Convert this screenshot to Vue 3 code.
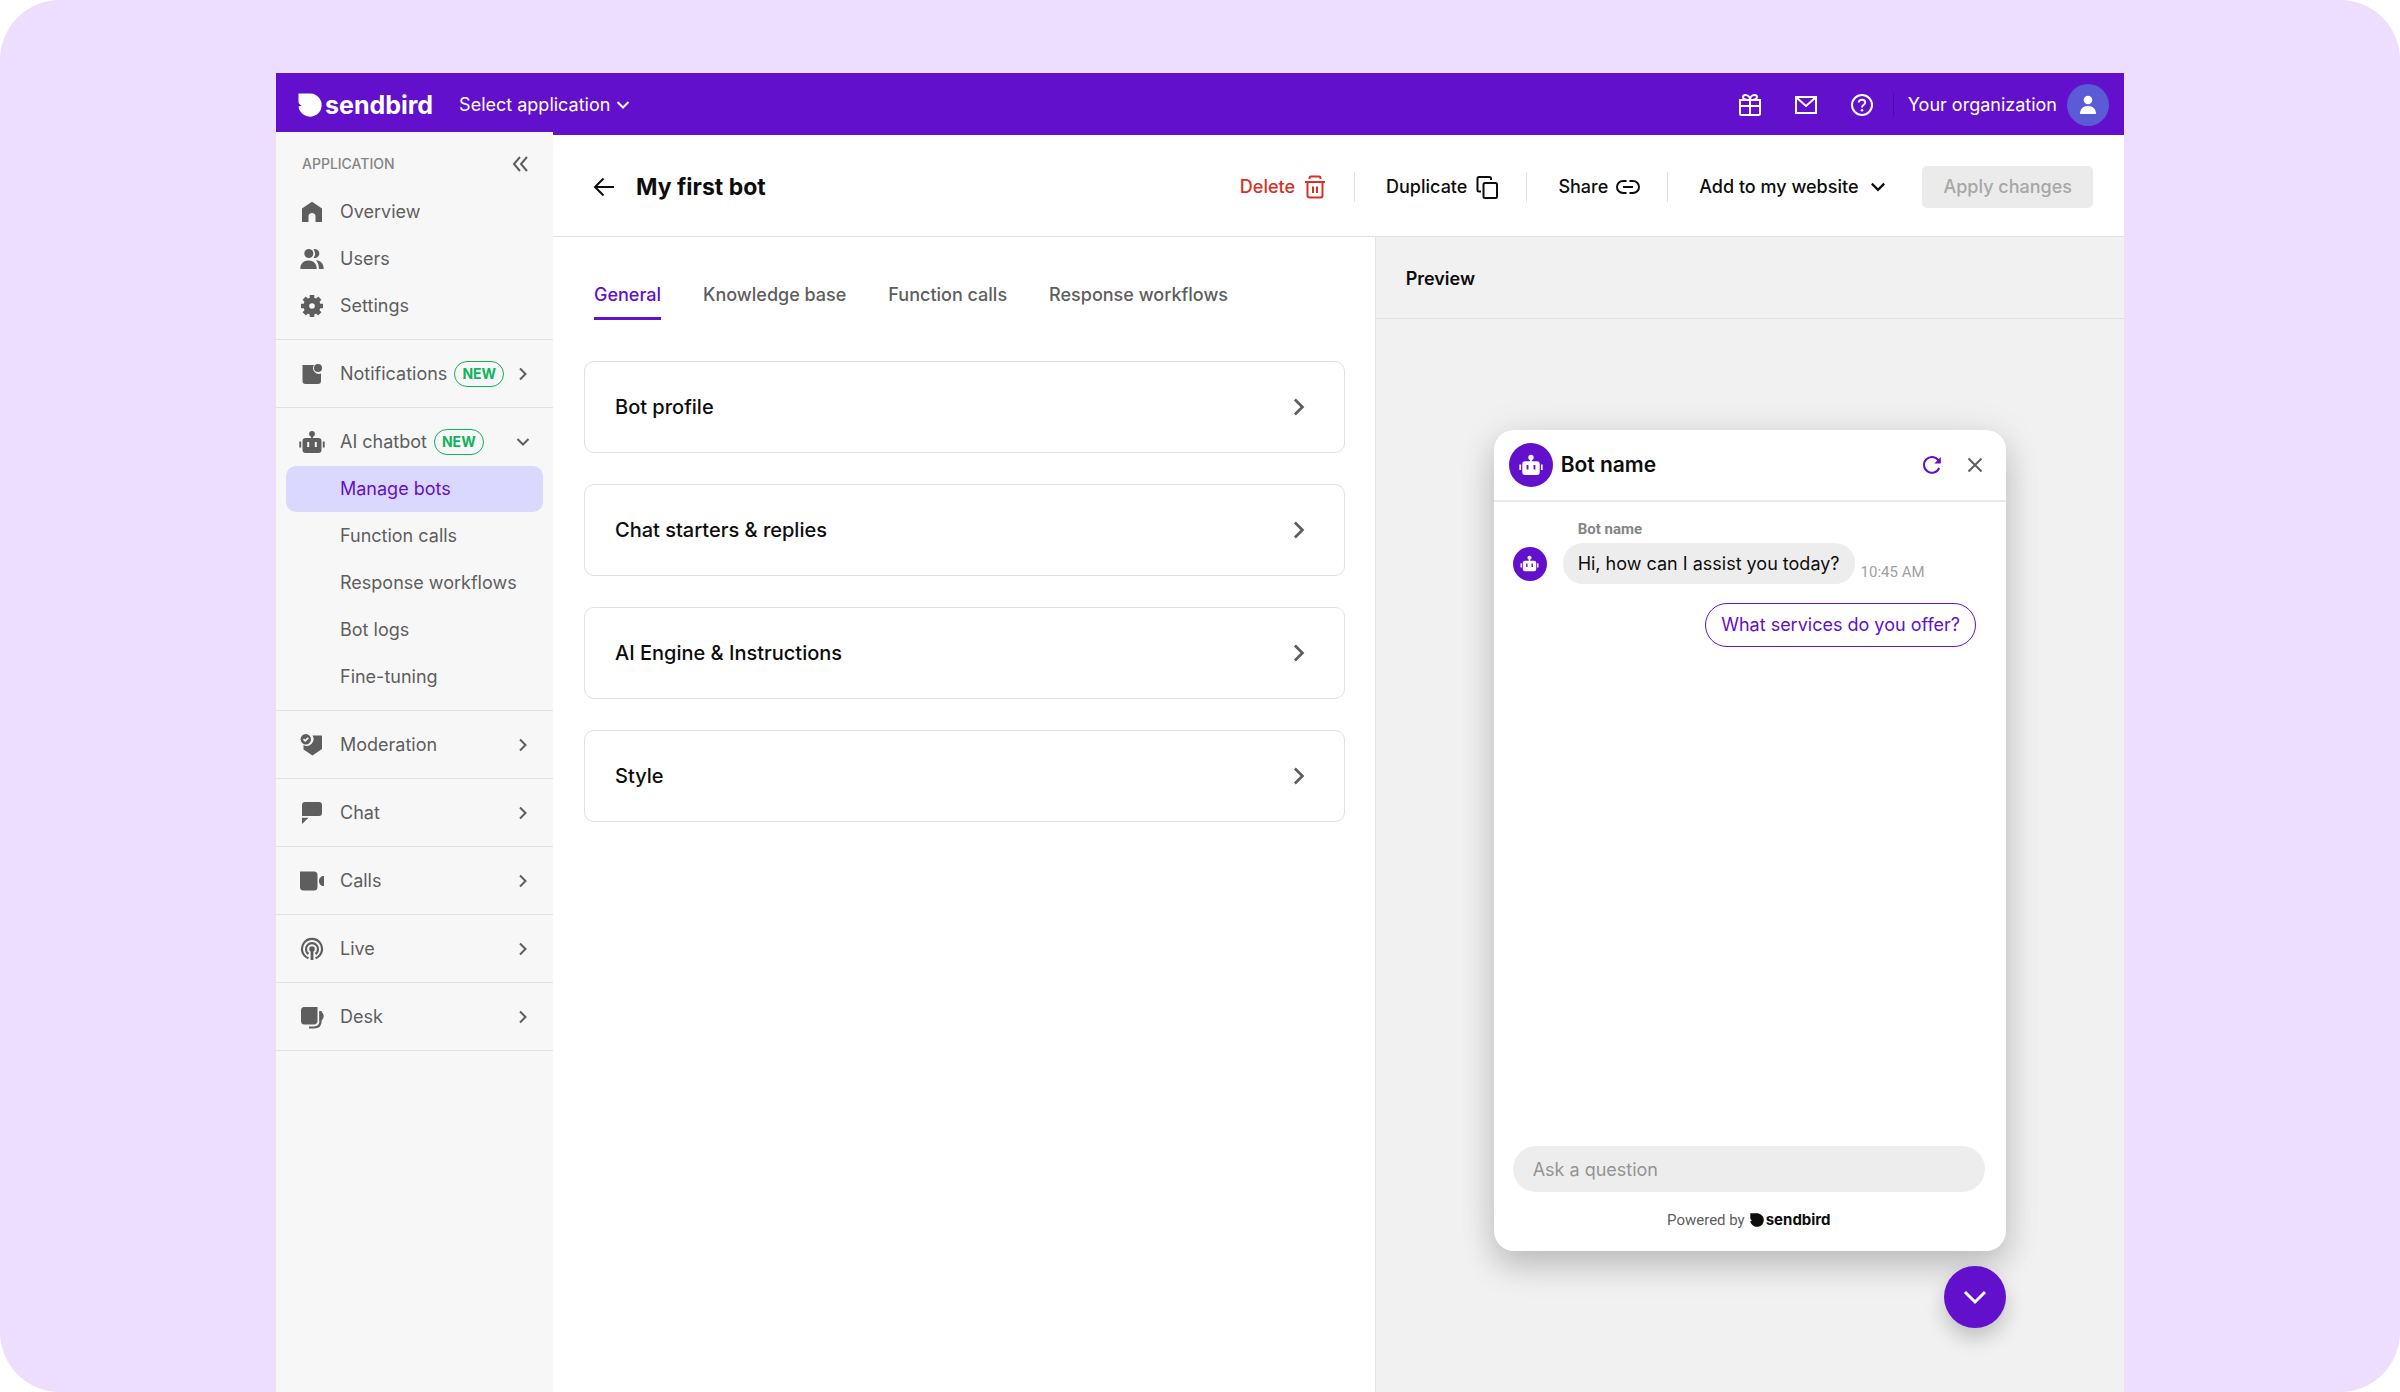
<script setup>
import { ref } from 'vue'

const question = ref('')

const topLinks = [
  { label: 'Overview', icon: 'home' },
  { label: 'Users', icon: 'users' },
  { label: 'Settings', icon: 'gear' }
]

const products = [
  { label: 'Notifications', icon: 'notification', isNew: true },
  {
    label: 'AI chatbot',
    icon: 'bot',
    isNew: true,
    children: ['Manage bots', 'Function calls', 'Response workflows', 'Bot logs', 'Fine-tuning']
  },
  { label: 'Moderation', icon: 'shield' },
  { label: 'Chat', icon: 'chat' },
  { label: 'Calls', icon: 'video' },
  { label: 'Live', icon: 'live' },
  { label: 'Desk', icon: 'desk' }
]

const tabs = ['General', 'Knowledge base', 'Function calls', 'Response workflows']
const cards = ['Bot profile', 'Chat starters & replies', 'AI Engine & Instructions', 'Style']
</script>

<template>
  <div class="page">
    <svg class="sprite" aria-hidden="true">
      <symbol id="mark" viewBox="0 0 24 24">
        <path d="M0.5 0.5H12A11.6 11.6 0 1 1 2.6 18.8C1.4 17.2 0.7 15.4 0.6 13.6L3.8 12.5C2 11.9 0.5 10.4 0.5 8.400Z" fill="currentColor" />
      </symbol>
      <symbol id="home" viewBox="0 0 24 24">
        <path d="M2 22V8.600L12 1.800L22 8.600V22H15.500V16.500A3.500 3.500 0 0 0 8.500 16.500V22Z" fill="currentColor" />
      </symbol>
      <symbol id="users" viewBox="0 0 24 24">
        <g fill="currentColor">
          <circle cx="8.800" cy="6.500" r="4.500" />
          <path d="M0.300 22C0.300 16.500 3.500 13.500 8.500 13.500S16.700 16.500 16.700 22Z" />
          <path d="M13.500 2.200A4.500 4.500 0 1 1 13.500 10.800A7 7 0 0 0 13.500 2.200Z" />
          <path d="M16 13.300C20.800 13.600 23.700 17 23.700 22H18.900C18.900 18.300 17.900 15.300 16 13.300Z" />
        </g>
      </symbol>
      <symbol id="gear" viewBox="0 0 24 24">
        <circle cx="12" cy="12" r="5.700" fill="none" stroke="currentColor" stroke-width="5.800" />
        <path d="M12 1V5M12 19V23M1 12H5M19 12H23M4.200 4.200L7 7M17 17L19.800 19.800M4.200 19.800L7 17M17 7L19.800 4.200" fill="none" stroke="currentColor" stroke-width="4.600" />
      </symbol>
      <symbol id="notification" viewBox="0 0 24 24">
        <path d="M2.500 3H14A5.800 5.800 0 0 0 21 11.500V19A3 3 0 0 1 18 22H5.500A3 3 0 0 1 2.500 19Z" fill="currentColor" />
        <circle cx="18" cy="6" r="4" fill="currentColor" />
      </symbol>
      <symbol id="bot" viewBox="0 0 26 24">
        <g fill="currentColor">
          <circle cx="13" cy="3.800" r="2.900" />
          <path d="M12.100 5H13.900V9H12.100ZM0.300 11.500H2.200V17.500H0.300ZM23.800 11.500H25.700V17.500H23.800Z" />
          <path fill-rule="evenodd" d="M6.500 8H19.500A3 3 0 0 1 22.500 11V20A3 3 0 0 1 19.500 23H6.500A3 3 0 0 1 3.500 20V11A3 3 0 0 1 6.500 8ZM8.200 12V17H10.200V12ZM15.800 12V17H17.800V12Z" />
        </g>
      </symbol>
      <symbol id="shield" viewBox="0 0 24 24">
        <path d="M12.500 2.500H22V16L12.500 22.500L3.500 16.500V12A6.800 6.800 0 0 0 12.500 2.500Z" fill="currentColor" />
        <circle cx="5.800" cy="6.200" r="5.200" fill="currentColor" />
        <path d="M3.500 6.200L5.200 7.800L8.300 4.800" fill="none" stroke="#f7f7f7" stroke-width="1.800" />
      </symbol>
      <symbol id="chat" viewBox="0 0 24 24">
        <path d="M5 1H19A3 3 0 0 1 22 4V12A3 3 0 0 1 19 15H2V4A3 3 0 0 1 5 1ZM2 16.800H8.500L2 23Z" fill="currentColor" />
      </symbol>
      <symbol id="video" viewBox="0 0 24 24">
        <path d="M0 2.500H14A3.500 3.500 0 0 1 17.500 6V18A3.500 3.500 0 0 1 14 21.500H3.500A3.500 3.500 0 0 1 0 18ZM24 7V17C21 17 19 15 19 12S21 7 24 7Z" fill="currentColor" />
      </symbol>
      <symbol id="live" viewBox="0 0 24 24">
        <g fill="none" stroke="currentColor" stroke-width="2.200">
          <path d="M8.500 21.300A10 10 0 1 1 15.500 21.300" />
          <path d="M8.500 17A6 6 0 1 1 15.500 17" />
          <path d="M12 12V23" stroke-width="2.800" />
        </g>
        <circle cx="12" cy="12" r="2.800" fill="currentColor" />
      </symbol>
      <symbol id="desk" viewBox="0 0 24 24">
        <path d="M3.500 2H17.500V15.500A3.500 3.500 0 0 1 14 19.500H4.500A3.500 3.500 0 0 1 1 16V5A3 3 0 0 1 3.500 2Z" fill="currentColor" />
        <path d="M9 22.500H14C18.500 22.500 20.500 20 20.500 16V6" fill="none" stroke="currentColor" stroke-width="2.200" />
        <path d="M19.400 6C22 6.500 23.700 8.500 23.700 11S22 15.800 19.400 16.300Z" fill="currentColor" />
      </symbol>
      <symbol id="right" viewBox="0 0 16 16">
        <path d="M5 2.500L10.500 8L5 13.500" fill="none" stroke="currentColor" stroke-width="2" />
      </symbol>
      <symbol id="down" viewBox="0 0 16 16">
        <path d="M2.500 5L8 10.500L13.500 5" fill="none" stroke="currentColor" stroke-width="2" />
      </symbol>
    </svg>

    <div class="app">
      <header class="topbar">
        <a class="brand" href="#">
          <svg class="brand-mark"><use href="#mark" /></svg>
          <span>sendbird</span>
        </a>
        <button class="app-switch" type="button">
          Select application
          <svg class="ico16"><use href="#down" /></svg>
        </button>
        <div class="top-actions">
          <button type="button" aria-label="What's new">
            <svg class="ico24" viewBox="0 0 24 24" fill="none" stroke="currentColor" stroke-width="2">
              <path d="M2 7H22V13H2ZM2 13V20.500A1.500 1.500 0 0 0 3.500 22H20.500A1.500 1.500 0 0 0 22 20.500V13M12 7V22" />
              <path d="M12 7C6 7 5 5.500 5 4C5 2.600 6 2 7.500 2C10 2 12 4 12 7ZM12 7C18 7 19 5.500 19 4C19 2.600 18 2 16.500 2C14 2 12 4 12 7Z" />
            </svg>
          </button>
          <button type="button" aria-label="Messages">
            <svg class="ico24" viewBox="0 0 24 24" fill="none" stroke="currentColor" stroke-width="2">
              <path d="M2 4H22V20H2ZM3 5L12 13L21 5" />
            </svg>
          </button>
          <button type="button" aria-label="Help">
            <svg class="ico24" viewBox="0 0 24 24" fill="none" stroke="currentColor" stroke-width="2">
              <circle cx="12" cy="12" r="10" />
              <path d="M8.700 9.500C8.900 7.600 10.200 6.700 12 6.700C13.900 6.700 15.200 7.800 15.200 9.400C15.200 11.800 12 11.700 12 14.500" />
              <circle cx="12" cy="17.300" r="1.300" fill="currentColor" stroke="none" />
            </svg>
          </button>
        </div>
        <button class="org" type="button">
          Your organization
          <span class="org-avatar">
            <svg class="ico24" viewBox="0 0 24 24" fill="currentColor">
              <circle cx="12" cy="7" r="4.300" />
              <path d="M4 21C4 16 7 13 12 13S20 16 20 21Z" />
            </svg>
          </span>
        </button>
      </header>

      <div class="body">
        <aside class="sidebar">
          <nav>
            <section class="group first">
              <div class="group-title">
                <h2>APPLICATION</h2>
                <button type="button" aria-label="Collapse sidebar">
                  <svg class="ico18" viewBox="0 0 18 18" fill="none" stroke="currentColor" stroke-width="2">
                    <path d="M9 2L3 9L9 16M16 2L10 9L16 16" />
                  </svg>
                </button>
              </div>
              <a v-for="l in topLinks" :key="l.label" class="row" href="#">
                <svg class="ico24"><use :href="'#' + l.icon" /></svg>
                <span>{{ l.label }}</span>
              </a>
            </section>
            <section v-for="p in products" :key="p.label" class="group">
              <a class="row" href="#">
                <svg class="ico24" :class="{ wide: p.icon === 'bot' }"><use :href="'#' + p.icon" /></svg>
                <span>{{ p.label }}</span>
                <span v-if="p.isNew" class="new">NEW</span>
                <svg class="ico16 caret"><use :href="p.children ? '#down' : '#right'" /></svg>
              </a>
              <a
                v-for="(c, i) in p.children"
                :key="c"
                class="row sub"
                :class="{ active: i === 0 }"
                href="#"
              >{{ c }}</a>
            </section>
          </nav>
        </aside>

        <main class="main">
          <div class="titlebar">
            <button class="back" type="button" aria-label="Back">
              <svg class="ico24" viewBox="0 0 24 24" fill="none" stroke="currentColor" stroke-width="2">
                <path d="M22 12H3.500M11.500 3.500L3 12L11.500 20.500" />
              </svg>
            </button>
            <h1>My first bot</h1>
            <div class="tools">
              <button class="danger" type="button">
                Delete
                <svg class="ico24" viewBox="0 0 24 24" fill="none" stroke="currentColor" stroke-width="2">
                  <path d="M2 7H22M6.500 4V3A1.500 1.500 0 0 1 8 1.500H16A1.500 1.500 0 0 1 17.500 3V4M4.500 7V20.500A2 2 0 0 0 6.500 22.500H17.500A2 2 0 0 0 19.500 20.500V7M10 11.500V18M14 11.500V18" />
                </svg>
              </button>
              <button type="button">
                Duplicate
                <svg class="ico24" viewBox="0 0 24 24" fill="none" stroke="currentColor" stroke-width="2">
                  <rect x="8.500" y="8" width="13.500" height="15" rx="1.500" />
                  <path d="M6 16.500H4A1.500 1.500 0 0 1 2.500 15V3.500A1.500 1.500 0 0 1 4 2H14.500A1.500 1.500 0 0 1 16 3.500V5" />
                </svg>
              </button>
              <button type="button">
                Share
                <svg class="ico24" viewBox="0 0 24 24" fill="none" stroke="currentColor" stroke-width="2">
                  <path d="M10.500 6H7A6 6 0 0 0 7 18H10.500M13.500 6H17A6 6 0 0 1 17 18H13.500M7 12H17" />
                </svg>
              </button>
              <button class="website" type="button">
                Add to my website
                <svg class="ico18"><use href="#down" /></svg>
              </button>
            </div>
            <button class="apply" type="button" disabled>Apply changes</button>
          </div>

          <div class="panes">
            <section class="editor">
              <div class="tabs" role="tablist">
                <button
                  v-for="(t, i) in tabs"
                  :key="t"
                  type="button"
                  role="tab"
                  :aria-selected="i === 0"
                  :class="{ current: i === 0 }"
                >{{ t }}</button>
              </div>
              <div class="cards">
                <button v-for="c in cards" :key="c" class="card" type="button">
                  {{ c }}
                  <svg class="ico22"><use href="#right" /></svg>
                </button>
              </div>
            </section>

            <section class="preview">
              <h2 class="preview-title">Preview</h2>
              <div class="stage">
                <div class="widget">
                  <div class="widget-head">
                    <span class="avatar large"><svg><use href="#bot" /></svg></span>
                    <h3>Bot name</h3>
                    <button class="refresh" type="button" aria-label="Restart chat">
                      <svg class="ico22" viewBox="0 0 22 22" fill="none" stroke="currentColor" stroke-width="2">
                        <path d="M18.200 14A7.900 7.900 0 1 1 17.500 6.500L19 8.500" />
                        <path d="M19.800 3V9.500H13.300Z" fill="currentColor" stroke="none" />
                      </svg>
                    </button>
                    <button class="close" type="button" aria-label="Close chat">
                      <svg class="ico22" viewBox="0 0 22 22" fill="none" stroke="currentColor" stroke-width="2">
                        <path d="M4.500 4.500L17.500 17.500M17.500 4.500L4.500 17.500" />
                      </svg>
                    </button>
                  </div>
                  <div class="thread">
                    <p class="sender">Bot name</p>
                    <div class="message">
                      <span class="avatar small"><svg><use href="#bot" /></svg></span>
                      <p class="bubble">Hi, how can I assist you today?</p>
                      <time>10:45 AM</time>
                    </div>
                    <button class="suggestion" type="button">What services do you offer?</button>
                  </div>
                  <div class="widget-foot">
                    <input v-model="question" type="text" placeholder="Ask a question" aria-label="Ask a question" />
                    <p class="powered">
                      Powered by
                      <span class="mini-brand">
                        <svg><use href="#mark" /></svg>
                        sendbird
                      </span>
                    </p>
                  </div>
                </div>
                <button class="launcher" type="button" aria-label="Minimize chat">
                  <svg viewBox="0 0 28 28" fill="none" stroke="currentColor" stroke-width="3">
                    <path d="M4 9L14 19L24 9" />
                  </svg>
                </button>
              </div>
            </section>
          </div>
        </main>
      </div>
    </div>
  </div>
</template>

<style>
html,
body {
  margin: 0;
  background: #ffffff;
}
</style>

<style scoped>
* {
  box-sizing: border-box;
}
.page {
  display: flex;
  flex-direction: column;
  min-height: 100vh;
  padding: 73px 11.5% 0;
  border-radius: 60px;
  background: #edddff;
  color: #0d0d0d;
  font-family: Inter, "Liberation Sans", sans-serif;
  font-size: 18px;
  line-height: 24px;
}
.sprite {
  position: absolute;
  width: 0;
  height: 0;
}
h1,
h2,
h3,
p {
  margin: 0;
}
button {
  display: flex;
  align-items: center;
  padding: 0;
  border: 0;
  background: none;
  color: inherit;
  font: inherit;
  white-space: nowrap;
}
a {
  color: inherit;
  text-decoration: none;
}
svg {
  display: block;
  flex: none;
}
.ico16 { width: 16px; height: 16px; }
.ico18 { width: 18px; height: 18px; }
.ico22 { width: 22px; height: 22px; }
.ico24 { width: 24px; height: 24px; }

.app {
  flex: 1;
  display: flex;
  flex-direction: column;
}
.topbar {
  display: flex;
  align-items: center;
  height: 62px;
  padding: 1px 15px 0 22px;
  background: #6210cc;
  color: #ffffff;
}
.brand {
  display: flex;
  align-items: center;
  gap: 3px;
  font-size: 25px;
  font-weight: 700;
}
.brand-mark {
  width: 24px;
  height: 24px;
}
.app-switch {
  gap: 5px;
  margin-left: 26px;
}
.top-actions {
  display: flex;
  gap: 32px;
  margin-left: auto;
  padding-right: 19px;
  border-right: 1px solid #5109ad;
}
.org {
  gap: 10px;
  margin-left: 14px;
}
.org-avatar {
  display: flex;
  align-items: center;
  justify-content: center;
  width: 42px;
  height: 42px;
  border-radius: 50%;
  background: #5b5bd6;
}

.body {
  flex: 1;
  display: flex;
}
.sidebar {
  flex: none;
  width: 277px;
  margin-top: -3px;
  background: #f7f7f7;
  color: #5e5e5e;
}
.group {
  display: flex;
  flex-direction: column;
  gap: 1px;
  padding: 11px 10px 10px;
  border-bottom: 1px solid #e0e0e0;
}
.group.first {
  padding-top: 8px;
}
.group-title {
  display: flex;
  align-items: center;
  justify-content: space-between;
  height: 48px;
  padding: 0 14px 0 16px;
}
.group-title h2 {
  color: #858585;
  font-size: 14px;
  font-weight: 500;
}
.row {
  display: flex;
  align-items: center;
  height: 46px;
  padding: 0 12px 0 14px;
  border-radius: 10px;
}
.row .ico24 {
  margin-right: 16px;
}
.row .wide {
  width: 26px;
  margin: 0 15px 0 -1px;
}
.new {
  height: 26px;
  margin-left: 7px;
  padding: 0 7px;
  border: 1px solid #10b35e;
  border-radius: 13px;
  color: #10b35e;
  font-size: 14px;
  font-weight: 700;
}
.caret {
  margin-left: auto;
}
.sub {
  padding-left: 54px;
}
.sub.active {
  background: #dbd8ff;
  color: #6210cc;
}

.main {
  flex: 1;
  display: flex;
  flex-direction: column;
  min-width: 0;
  background: #ffffff;
}
.titlebar {
  display: flex;
  align-items: center;
  height: 102px;
  padding: 2px 31px 0 39px;
  border-bottom: 1px solid #e0e0e0;
  font-weight: 500;
}
.titlebar h1 {
  margin-left: 20px;
  font-size: 23px;
  font-weight: 700;
}
.tools {
  display: flex;
  align-items: center;
  margin-left: auto;
}
.tools button {
  gap: 8px;
  height: 30px;
  padding: 0 27px 0 31px;
}
.tools button + button {
  border-left: 1px solid #e0e0e0;
}
.tools .website {
  gap: 11px;
  padding-right: 35px;
}
.danger {
  color: #da2f26;
}
.apply {
  height: 42px;
  padding: 0 21px;
  border-radius: 5px;
  background: #ebebeb;
  color: #a6a6a6;
}
.panes {
  flex: 1;
  display: flex;
}
.editor {
  flex: none;
  width: 52.3%;
  padding: 44px 30px 31px 31px;
}
.tabs {
  display: flex;
  gap: 42px;
  padding-left: 10px;
}
.tabs button {
  height: 39px;
  padding-bottom: 8px;
  border-bottom: 3px solid transparent;
  color: #5e5e5e;
  font-weight: 500;
}
.tabs .current {
  border-color: #6210cc;
  color: #6210cc;
}
.cards {
  display: flex;
  flex-direction: column;
  gap: 31px;
  margin-top: 41px;
}
.card {
  justify-content: space-between;
  height: 92px;
  padding: 0 34px 0 30px;
  border: 1px solid #e0e0e0;
  border-radius: 10px;
  font-size: 20px;
  font-weight: 500;
}
.card svg {
  color: #5e5e5e;
}

.preview {
  flex: 1;
  min-width: 0;
  display: flex;
  flex-direction: column;
  border-left: 1px solid #e0e0e0;
  background: #f1f1f1;
}
.preview-title {
  padding: 30px 30px 27px;
  border-bottom: 1px solid #e0e0e0;
  font-size: 18px;
  font-weight: 600;
}
.stage {
  display: flex;
  flex-direction: column;
  align-items: flex-end;
  gap: 15px;
  padding: 111px 118px 64px;
}
.widget {
  display: flex;
  flex-direction: column;
  width: 100%;
  min-height: 821px;
  border-radius: 20px;
  background: #ffffff;
  box-shadow: 0 16px 32px rgba(0, 0, 0, 0.18), 0 2px 40px rgba(0, 0, 0, 0.08);
}
.widget-head {
  display: flex;
  align-items: center;
  height: 72px;
  padding: 0 20px 0 15px;
  border-bottom: 2px solid #eaeaea;
}
.widget-head h3 {
  margin: 0 auto 0 8px;
  font-size: 21px;
  font-weight: 600;
}
.refresh {
  color: #6210cc;
}
.close {
  margin-left: 21px;
  color: #5e5e5e;
}
.avatar {
  display: flex;
  align-items: center;
  justify-content: center;
  flex: none;
  border-radius: 50%;
  background: #6210cc;
  color: #ffffff;
}
.avatar.large { width: 44px; height: 44px; }
.avatar.large svg { width: 24px; height: 22px; }
.avatar.small { width: 34px; height: 34px; margin-right: 16px; }
.avatar.small svg { width: 19px; height: 17px; }
.thread {
  flex: 1;
  display: flex;
  flex-direction: column;
  padding: 15px 30px 0 19px;
}
.sender {
  padding-left: 65px;
  color: #858585;
  font-family: Roboto, sans-serif;
  font-size: 15px;
  font-weight: 700;
}
.message {
  display: flex;
  align-items: center;
  margin-top: 2px;
}
.bubble {
  height: 41px;
  padding: 0 15px;
  border-radius: 20px;
  background: #ededed;
  line-height: 41px;
}
time {
  align-self: flex-end;
  margin-left: 6px;
  color: #a0a0a0;
  font-family: Roboto, sans-serif;
  font-size: 15px;
}
.suggestion {
  align-self: flex-end;
  height: 44px;
  margin-top: 19px;
  padding: 0 15px;
  border: 1px solid #6210cc;
  border-radius: 22px;
  color: #6210cc;
}
.widget-foot {
  padding: 0 21px 19px 19px;
}
.widget-foot input {
  width: 100%;
  height: 46px;
  padding: 0 20px;
  border: 0;
  border-radius: 23px;
  background: #ededed;
  color: #0d0d0d;
  font: inherit;
}
.widget-foot input::placeholder {
  color: #949494;
}
.powered {
  display: flex;
  align-items: center;
  justify-content: center;
  gap: 5px;
  margin-top: 16px;
  color: #5e5e5e;
  font-family: Roboto, sans-serif;
  font-size: 15px;
}
.mini-brand {
  display: flex;
  align-items: center;
  gap: 2px;
  color: #0d0d0d;
  font-family: Inter, sans-serif;
  font-size: 15px;
  font-weight: 700;
}
.mini-brand svg {
  width: 14px;
  height: 14px;
}
.launcher {
  justify-content: center;
  width: 62px;
  height: 62px;
  border-radius: 50%;
  background: #6210cc;
  color: #ffffff;
  box-shadow: 0 10px 20px rgba(0, 0, 0, 0.2);
}
.launcher svg {
  width: 28px;
  height: 28px;
}
</style>
